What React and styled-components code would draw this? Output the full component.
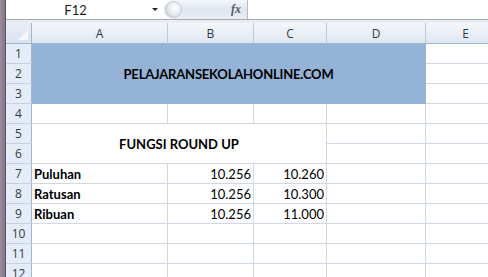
import React from 'react';
import styled, { createGlobalStyle } from 'styled-components';

const GlobalStyle = createGlobalStyle`
  html, body {
    margin: 0;
    padding: 0;
    background: #ffffff;
  }
  body {
    font-family: Lato, "Open Sans", sans-serif;
  }
`;

const columns = ['A', 'B', 'C', 'D', 'E'];
const rowNumbers = [1, 2, 3, 4, 5, 6, 7, 8, 9, 10, 11, 12];

const data = [
  { label: 'Puluhan', value: '10.256', result: '10.260' },
  { label: 'Ratusan', value: '10.256', result: '10.300' },
  { label: 'Ribuan', value: '10.256', result: '11.000' },
];

const Window = styled.div`
  display: flex;
  width: 488px;
  height: 277px;
  overflow: hidden;
`;

const Frame = styled.div`
  width: 5px;
  flex: none;
  background: linear-gradient(90deg, #9c8c9c, #86758a);
  border-right: 1px solid #5f5565;
`;

const Main = styled.div`
  flex: 1;
  display: flex;
  flex-direction: column;
  min-width: 0;
  background: #e9edf3;
`;

const FormulaBar = styled.div`
  display: flex;
  align-items: center;
  height: 20px;
  background: #ffffff;
  border-bottom: 1px solid #a7abb0;
  margin-bottom: 3px;
`;

const NameBox = styled.div`
  width: 139px;
  padding-right: 7px;
  display: flex;
  align-items: center;
  justify-content: center;
  font-family: Lato, sans-serif;
  font-size: 13px;
  color: #1e1e1e;
`;

const Arrow = styled.div`
  width: 0;
  height: 0;
  margin-right: 6px;
  border-left: 3px solid transparent;
  border-right: 3px solid transparent;
  border-top: 3px solid #222;
`;

const Pill = styled.div`
  position: relative;
  height: 19px;
  width: 84px;
  display: flex;
  align-items: center;
  justify-content: flex-end;
  padding-right: 6px;
  box-sizing: border-box;
  border-radius: 10px 0 0 10px;
  background: linear-gradient(180deg, #f4f7fb 0%, #dfe6ef 50%, #e9eef5 100%);
  border-right: 1px solid #b6bcc6;
`;

const Knob = styled.div`
  position: absolute;
  left: 1px;
  top: 1px;
  width: 15px;
  height: 15px;
  border-radius: 50%;
  background: radial-gradient(circle at 60% 40%, #ffffff 0%, #e4e8ee 55%, #b8c0cb 100%);
  border: 1px solid #c3c9d2;
`;

const Fx = styled.span`
  font-family: "Liberation Serif", serif;
  font-style: italic;
  font-weight: bold;
  font-size: 12px;
  color: #555a62;
`;

const Input = styled.div`
  flex: 1;
  height: 100%;
  background: #ffffff;
`;

const Sheet = styled.div`
  display: grid;
  grid-template-columns: 26px 136px 86px 73px 99px 80px;
  grid-template-rows: 21px;
  grid-auto-rows: 20px;
  background: #ffffff;
`;

const Corner = styled.div`
  position: relative;
  background: linear-gradient(180deg, #e9eef6, #d9e3ef);
  border-right: 1px solid #9eb6ce;
  border-bottom: 1px solid #9eb6ce;
  &::after {
    content: '';
    position: absolute;
    right: 3px;
    bottom: 3px;
    width: 0;
    height: 0;
    border-left: 10px solid transparent;
    border-bottom: 10px solid #f6f8fb;
  }
`;

const ColHeader = styled.div`
  display: flex;
  align-items: center;
  justify-content: center;
  font-family: "Open Sans", sans-serif;
  font-size: 12px;
  color: #333a42;
  background: linear-gradient(180deg, #f4f7fb 0%, #e8eef6 60%, #dde6f1 100%);
  border-right: 1px solid #bccbdc;
  border-bottom: 1px solid #9eb6ce;
`;

const RowHeader = styled.div`
  grid-column: 1;
  grid-row: ${(p) => p.$row + 1};
  display: flex;
  align-items: center;
  justify-content: center;
  font-family: "Open Sans", sans-serif;
  font-size: 12px;
  color: #333a42;
  background: #e4ecf7;
  border-right: 1px solid #9eb6ce;
  border-bottom: 1px solid #c5d1df;
`;

const Cell = styled.div`
  grid-column: ${(p) => p.$col + 2} / span ${(p) => p.$span || 1};
  grid-row: ${(p) => p.$row + 1} / span ${(p) => p.$rows || 1};
  display: flex;
  align-items: center;
  justify-content: ${(p) => (p.$align === 'right' ? 'flex-end' : p.$align === 'center' ? 'center' : 'flex-start')};
  padding: 0 2px;
  overflow: hidden;
  white-space: nowrap;
  font-family: Lato, "Open Sans", sans-serif;
  font-size: 13px;
  letter-spacing: ${(p) => (p.$tight ? '-0.2px' : 'normal')};
  font-weight: ${(p) => (p.$bold ? 700 : 400)};
  color: #000;
  background: ${(p) => (p.$fill ? '#95b3d7' : '#ffffff')};
  border-right: 1px solid ${(p) => (p.$fill ? '#95b3d7' : '#d0d7e5')};
  border-bottom: 1px solid ${(p) => (p.$fill ? '#95b3d7' : '#d0d7e5')};
`;

const isCovered = (row, col) => {
  if (row <= 3 && col <= 3) return true;
  if ((row === 5 || row === 6) && col <= 2) return true;
  if (row >= 7 && row <= 9 && col <= 2) return true;
  return false;
};

const App = () => {
  const blanks = [];
  rowNumbers.forEach((row) => {
    columns.forEach((_, col) => {
      if (!isCovered(row, col)) {
        blanks.push(<Cell key={`${row}-${col}`} $row={row} $col={col} />);
      }
    });
  });

  return (
    <>
      <GlobalStyle />
      <Window>
        <Frame />
        <Main>
          <FormulaBar>
            <NameBox>F12</NameBox>
            <Arrow />
            <Pill>
              <Knob />
              <Fx>fx</Fx>
            </Pill>
            <Input />
          </FormulaBar>
          <Sheet>
            <Corner />
            {columns.map((c) => (
              <ColHeader key={c}>{c}</ColHeader>
            ))}
            <ColHeader />
            {rowNumbers.map((r) => (
              <RowHeader key={r} $row={r}>
                {r}
              </RowHeader>
            ))}
            <Cell $row={1} $col={0} $span={4} $rows={3} $fill $bold $tight $align="center">
              PELAJARANSEKOLAHONLINE.COM
            </Cell>
            <Cell $row={5} $col={0} $span={3} $rows={2} $bold $align="center">
              FUNGSI ROUND UP
            </Cell>
            {data.map((d, i) => (
              <React.Fragment key={d.label}>
                <Cell $row={7 + i} $col={0} $bold>
                  {d.label}
                </Cell>
                <Cell $row={7 + i} $col={1} $align="right">
                  {d.value}
                </Cell>
                <Cell $row={7 + i} $col={2} $align="right">
                  {d.result}
                </Cell>
              </React.Fragment>
            ))}
            {blanks}
          </Sheet>
        </Main>
      </Window>
    </>
  );
};

export default App;
